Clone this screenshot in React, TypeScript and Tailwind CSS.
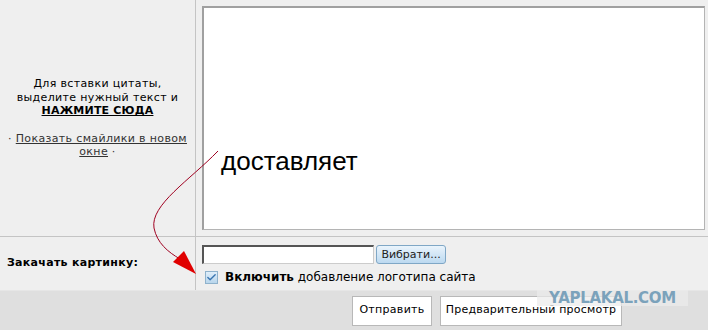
import { Check } from "lucide-react";

const UI_FONT = "font-['Tahoma','DejaVu_Sans','Liberation_Sans',sans-serif]";

export default function App() {
  return (
    <div className={`relative h-[330px] w-[708px] overflow-hidden bg-[#efefef] text-[11px] text-black ${UI_FONT}`}>
      <div className="flex h-[290px]">
        <div className="flex w-[196px] flex-col border-r border-[#c4c4c4]">
          <div className="flex h-[237px] flex-col items-center justify-center border-b border-[#c4c4c4] px-[6px] text-center leading-[13.5px] tracking-[0.35px]">
            <div>Для вставки цитаты,</div>
            <div>выделите нужный текст и</div>
            <div className="font-bold underline tracking-[0.2px]">НАЖМИТЕ СЮДА</div>
            <div className="mt-[14px] text-[#333]">
              · <span className="underline">Показать смайлики в новом</span>
            </div>
            <div className="text-[#333]">
              <span className="underline">окне</span> ·
            </div>
          </div>
          <div className="flex flex-1 items-center pl-[7px] font-bold tracking-[0.3px]">Закачать картинку:</div>
        </div>

        <div className="flex flex-1 flex-col">
          <div className="h-[237px] border-b border-[#c4c4c4] pl-[6px] pt-[6px]">
            <div className="h-[224px] w-[503px] border-l-2 border-t-2 border-r border-b border-l-[#a0a0a0] border-t-[#a0a0a0] border-r-[#b4b4b4] border-b-[#b4b4b4] bg-white pl-[17px] pt-[138px]">
              <div className="font-['Liberation_Sans',Arial,sans-serif] text-[26px] leading-[30px]">доставляет</div>
            </div>
          </div>
          <div className="flex flex-col gap-[4px] pl-[6px] pt-[8px]">
            <div className="flex items-center gap-[2px]">
              <div className="h-[19px] w-[172px] border-l-2 border-t-2 border-r border-b border-l-[#555] border-t-[#555] border-r-[#ccc] border-b-[#ccc] bg-white" />
              <button
                type="button"
                className="h-[19px] w-[70px] rounded-[3px] border border-[#7fa7c6] bg-gradient-to-b from-[#eaf4fc] to-[#bcd9f0] text-[11px] leading-none text-[#222]"
              >
                Вибрати...
              </button>
            </div>
            <div className="flex items-center gap-[7px] pl-[3px]">
              <span className="grid size-[13px] place-items-center border border-[#8fb2cc] bg-gradient-to-b from-[#dfeefa] to-[#b9d6ec]">
                <Check size={11} strokeWidth={3} className="text-[#3a75b0]" />
              </span>
              <span className="text-[12px]">
                <b>Включить</b> добавление логотипа сайта
              </span>
            </div>
          </div>
        </div>
      </div>

      <div className="flex h-[40px] items-center justify-end gap-[8px] border-t border-[#e6e6e6] bg-[#dfdfdf] pr-[86px]">
        <button type="button" className="h-[30px] w-[80px] border border-[#b8b8b8] bg-white text-[11px] tracking-[0.3px] text-black">
          Отправить
        </button>
        <button type="button" className="h-[30px] w-[182px] border border-[#b8b8b8] bg-white text-[11px] tracking-[0.2px] text-black">
          Предварительный просмотр
        </button>
      </div>

      {/* watermark sits over the footer, as on the source page */}
      <div className="pointer-events-none absolute left-[537px] top-[290px] flex h-[16px] w-[151px] items-center justify-center bg-[#ebebeb]/70 font-['DejaVu_Sans',sans-serif] text-[15px] font-bold leading-none tracking-[-0.3px] text-[#7ba2bb]">
        YAPLAKAL.COM
      </div>

      {/* red arrow drawn over the form */}
      <svg className="pointer-events-none absolute left-0 top-0" width="708" height="330" viewBox="0 0 708 330">
        <path d="M218 151 C190 180 150 205 154 228 C157 243 168 252 180 259" fill="none" stroke="#a00020" strokeWidth="1" />
        <polygon points="173,262 184,251 196,274" fill="#e00000" />
      </svg>
    </div>
  );
}
